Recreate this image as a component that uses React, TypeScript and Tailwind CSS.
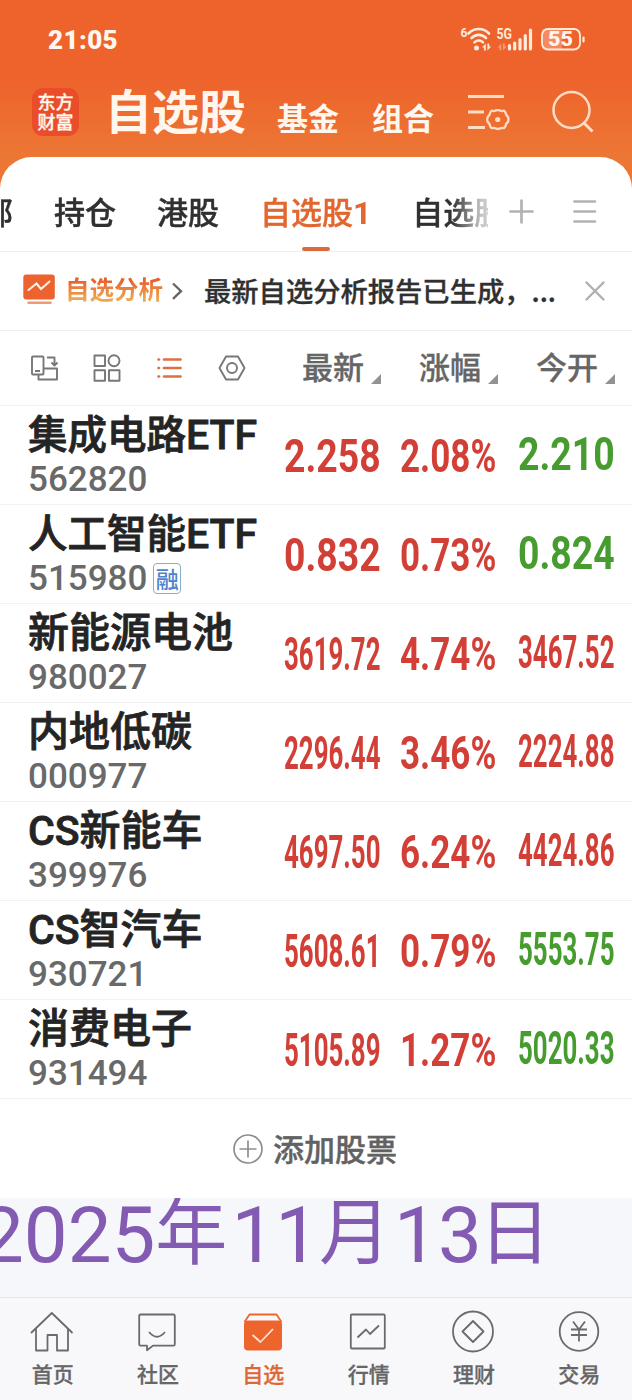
import React from "react";
import clsx from "clsx";

interface Stock {
  name: string;
  code: string;
  price: string;
  change: string;
  open: string;
  openUp: boolean;
  margin?: boolean;
}

const STOCKS: Stock[] = [
  { name: "集成电路ETF", code: "562820", price: "2.258", change: "2.08%", open: "2.210", openUp: false },
  { name: "人工智能ETF", code: "515980", price: "0.832", change: "0.73%", open: "0.824", openUp: false, margin: true },
  { name: "新能源电池", code: "980027", price: "3619.72", change: "4.74%", open: "3467.52", openUp: true },
  { name: "内地低碳", code: "000977", price: "2296.44", change: "3.46%", open: "2224.88", openUp: true },
  { name: "CS新能车", code: "399976", price: "4697.50", change: "6.24%", open: "4424.86", openUp: true },
  { name: "CS智汽车", code: "930721", price: "5608.61", change: "0.79%", open: "5553.75", openUp: false },
  { name: "消费电子", code: "931494", price: "5105.89", change: "1.27%", open: "5020.33", openUp: false },
];

const COLUMNS = ["最新", "涨幅", "今开"];

function StatusBar() {
  return (
    <div className="flex h-[80px] items-center justify-between pl-[48px] pr-[46px]">
      <span className="font-[Roboto] text-[26px] font-black leading-[32px] tracking-[0.4px]">21:05</span>
      <svg width="126" height="28" viewBox="460 26 126 28" fill="none" stroke="#ffeadc" strokeLinecap="round">
        <text x="460.5" y="37" fontFamily="Roboto" fontSize="12" fontWeight="700" fill="#ffeadc" stroke="none">6</text>
        <path d="M468.500 33.500a14 14 0 0 1 20.500 0" strokeWidth="2.600" />
        <path d="M471.500 38a10 10 0 0 1 14.500 0" strokeWidth="2.600" />
        <path d="M474.500 42.300a6 6 0 0 1 8.500 0" strokeWidth="2.600" />
        <circle cx="476.500" cy="48" r="2.500" fill="#ffeadc" stroke="none" />
        <path d="M485.800 50.500v-7l-3.800 4h2v3zM487.400 43.500v7l3.800-4h-2v-3z" fill="#ffeadc" stroke="none" />
        <text x="496.500" y="39" fontFamily="Roboto" fontSize="14.500" fontWeight="700" fill="#ffeadc" stroke="none" textLength="15.500" lengthAdjust="spacingAndGlyphs">5G</text>
        <path d="M501.300 50.500v-7l-3.800 4h2v3zM502.900 43.500v7l3.800-4h-2v-3z" fill="#f79a75" stroke="none" />
        <path d="M509.500 45.500v3.500M514.700 43v6M520 39.500v9.500M525.300 35.500v13.500M530.500 30v19" strokeWidth="3.200" />
        <path d="M544 29h18v20h-18q-2 0-2-2V31q0-2 2-2z" fill="#f48a62" stroke="none" />
        <rect x="542" y="29" width="38" height="20.500" rx="6" strokeWidth="1.800" />
        <path d="M583.500 37.500v4" strokeWidth="2.200" />
        <text x="548" y="46.300" fontFamily="Roboto" fontSize="19.500" fontWeight="900" fill="#fff4ec" stroke="none" textLength="25" lengthAdjust="spacingAndGlyphs">55</text>
      </svg>
    </div>
  );
}

function Header() {
  return (
    <header className="h-[190px] bg-[linear-gradient(#ee622b_0px,#ee622b_75px,#ec7735_157px)] text-[#fff7ee]">
      <StatusBar />
      <div className="flex h-[76px]">
        <div className="ml-[32px] mt-[8px] flex h-[48px] w-[47px] flex-col items-center justify-center rounded-[11px] bg-[#ea4d2a] pb-[3px] text-[18px] font-medium leading-[20px] [-webkit-text-stroke:0.3px]">
          <span>东方</span>
          <span>财富</span>
        </div>
        <h1 className="ml-[26px] mt-[-3px] text-[47px] font-bold leading-[64px]">自选股</h1>
        <span className="ml-[31px] mt-[17px] text-[31px] font-bold leading-[40px]">基金</span>
        <span className="ml-[33px] mt-[17px] text-[31px] font-bold leading-[40px]">组合</span>
        <svg className="ml-[32px] mt-[12px]" width="44" height="42" viewBox="466 92 44 42" fill="none" stroke="#ffdcc3" strokeWidth="2.800">
          <path d="M468 96.500h36M468 112h16M468 127.500h17" />
          <path d="M491.500 110.700q1.800.600 3 .200q1.600-.700 3.400-.700t3.300.700q1.200.400 2.800-.200q1.800 1.600 1.900 3.300q.600 1.500 1.800 2.500q.900 1 .700 3q0 1.800-.700 2.800q-1.400 1-1.800 2.400q-.200 2-1.900 3.400q-1.600-.400-2.800 0q-1.500.900-3.300.900t-3.400-.900q-1.200-.400-3 0q-1.600-1.400-1.700-3.400q-.500-1.400-1.700-2.400q-.900-1-.900-2.800q0-2 .900-3q1.200-1 1.700-2.500q.100-1.700 1.700-3.300z" strokeWidth="2.300" />
          <circle cx="497.700" cy="119.500" r="2.600" fill="#ffdcc3" stroke="none" />
        </svg>
        <svg className="ml-[41px] mt-[9px]" width="44" height="46" viewBox="551 89 44 46" fill="none" stroke="#ffdcc3" strokeWidth="2.500">
          <circle cx="571.500" cy="110" r="18" />
          <path d="M584 123l8.500 8.500" strokeWidth="3" />
        </svg>
      </div>
    </header>
  );
}

function GroupTabs() {
  return (
    <div className="flex h-[95px] overflow-hidden border-b border-[#efefef] text-[31px] font-medium leading-[40px] text-[#303030]">
      <div className="flex w-[488px] shrink-0 overflow-hidden whitespace-nowrap pt-[34px] [-webkit-text-stroke:0.4px] [mask-image:linear-gradient(90deg,#000_452px,#0004_482px)]">
        <span className="ml-[-18px]">部</span>
        <span className="ml-[41px]">持仓</span>
        <span className="ml-[41px]">港股</span>
        <div className="ml-[41px] flex w-[112px] flex-col items-center text-[#e2672f]">
          <span className="h-[40px]">
            自选股<b className="font-[Roboto] text-[32px] font-bold [-webkit-text-stroke:0px]">1</b>
          </span>
          <i className="mt-[16px] h-[4px] w-[28px] shrink-0 rounded-full bg-[#da6b3d]" />
        </div>
        <span className="ml-[41px]">自选股2</span>
      </div>
      <svg className="mt-[40px] ml-[20px]" width="92" height="30" viewBox="508 197 92 30" fill="none" stroke="#b2b2b2" strokeWidth="2.700" strokeLinecap="round">
        <path d="M510.500 211.500h22M521.500 200.500v22M574.500 201.500h20.500M574.500 211.500h20.500M574.500 221.500h20.500" />
      </svg>
    </div>
  );
}

function AnalysisBanner() {
  return (
    <div className="flex h-[79px] items-center border-b border-[#efefef] pb-[2px]">
      <svg className="ml-[22px]" width="34" height="32" viewBox="22 273 34 32" fill="none">
        <rect x="23.300" y="273.500" width="31.500" height="25" rx="3" fill="#ed6330" />
        <path d="M28.500 289l8-6.500 4.500 5.500 8.500-7.500" stroke="#fff3e8" strokeWidth="2" strokeLinecap="round" />
        <path d="M28.500 301.800h22" stroke="#f09a70" strokeWidth="2.500" strokeLinecap="round" />
      </svg>
      <span className="ml-[9px] mt-[-2px] bg-gradient-to-b from-[#e5622e] from-25% to-[#eda751] to-80% bg-clip-text text-[24.500px] font-bold leading-[34px] text-transparent">自选分析</span>
      <svg className="ml-[8px] mt-[1px]" width="13" height="20" viewBox="0 0 13 20" fill="none" stroke="#666" strokeWidth="2.400">
        <path d="M2 2.500l8 7.700-8 7.700" />
      </svg>
      <span className="ml-[20px] mt-[-1px] w-[356px] whitespace-nowrap text-[27.300px] font-medium leading-[36px] text-[#303030] [-webkit-text-stroke:0.3px]">最新自选分析报告已生成，...</span>
      <svg className="ml-[25px] mt-[2px]" width="20" height="20" viewBox="0 0 20 20" stroke="#b0b0b0" strokeWidth="2.400" strokeLinecap="round">
        <path d="M1.500 1.500l17 17M18.500 1.500l-17 17" />
      </svg>
    </div>
  );
}

function ListHeader() {
  return (
    <div className="flex h-[75px] border-b border-[#f2f2f2]">
      <svg className="ml-[28px] mt-[20px] shrink-0" width="220" height="34" viewBox="28 351 220 34" fill="none" stroke="#777" strokeWidth="1.900" strokeLinejoin="round">
        <rect x="32" y="356.500" width="11.500" height="18" rx="1" />
        <path d="M35 371h5M47 357.500h7.500v7M51.500 362.500l3 3 3-3" />
        <path d="M38.500 375v4.500h18.500v-11H43.500" />
        <rect x="94.500" y="355.500" width="10.500" height="10.500" />
        <circle cx="114" cy="360.800" r="5.500" />
        <rect x="94.500" y="370.300" width="10.500" height="10.500" />
        <rect x="109" y="370.300" width="10.500" height="10.500" />
        <path d="M158.500 359.500h.5M158.500 368h.5M158.500 376.500h.5M164 359.500h16.500M164 368h16.500M164 376.500h16.500" stroke="#dc7040" strokeWidth="2.700" strokeLinecap="round" />
        <path d="M226 356.500h12l6.500 11.500-6.500 11.500h-12L219.500 368z" />
        <circle cx="232" cy="368" r="5" />
      </svg>
      <div className="ml-[54px] flex gap-[38px]">
        {COLUMNS.map((label) => (
          <div key={label} className="flex w-[79px] pt-[15px] text-[31px] font-medium leading-[40px] text-[#666]">
            <span className="shrink-0 [-webkit-text-stroke:0.3px]">{label}</span>
            <svg className="ml-[7px] mt-[28px] shrink-0" width="10" height="10" viewBox="0 0 10 10" fill="#929292">
              <path d="M10 0v10H0z" />
            </svg>
          </div>
        ))}
      </div>
    </div>
  );
}

interface QuoteProps {
  value: string;
  up: boolean;
  className?: string;
}

// Squeezes the digits so every quote fills the same column width
function Quote({ value, up, className }: QuoteProps) {
  return (
    <div className={clsx("w-[97px] shrink-0 font-[Roboto] text-[47px] font-bold leading-[56px]", className)}>
      <span
        className={clsx(
          "block w-max origin-left",
          value.endsWith("%") ? "scale-x-[0.745]" : value.length > 5 ? "scale-x-[0.55]" : "scale-x-[0.795]",
          up ? "text-[#d23f36]" : "text-[#469c2e]"
        )}
      >
        {value}
      </span>
    </div>
  );
}

function StockRow({ stock }: { stock: Stock }) {
  return (
    <div className="flex h-[99px] border-b border-[#f2f2f2]">
      <div className="ml-[28px] w-[256px] shrink-0">
        <div className="mt-[5px] h-[49px] whitespace-nowrap font-[Roboto,'Noto_Sans_CJK_SC'] text-[41px] font-medium leading-[48px] text-[#242424] [-webkit-text-stroke:0.8px]">
          {stock.name.endsWith("ETF") ? (
            <>
              <span className="text-[39.500px]">{stock.name.slice(0, -3)}</span>ETF
            </>
          ) : (
            stock.name
          )}
        </div>
        <div className="flex h-[40px] items-center">
          <span className="font-[Roboto] text-[35px] font-medium leading-[40px] text-[#696969]">{stock.code}</span>
          {stock.margin && (
            <span className="ml-[6px] mt-[-1px] flex h-[31px] w-[28px] items-center justify-center rounded-[4px] border border-[#86aeca] pb-[2px] text-[23px] font-medium leading-[28px] text-[#4e83cc]">
              融
            </span>
          )}
        </div>
      </div>
      <Quote value={stock.price} up className="mt-[22px]" />
      <Quote value={stock.change} up className="ml-[19px] mt-[22px]" />
      <Quote value={stock.open} up={stock.openUp} className="ml-[21px] mt-[20px]" />
    </div>
  );
}

function AddStock() {
  return (
    <div className="flex h-[99px] items-center justify-center pr-[2px]">
      <svg width="30" height="30" viewBox="0 0 30 30" fill="none" stroke="#8d8d8d" strokeWidth="1.700">
        <circle cx="15" cy="15" r="14" />
        <path d="M6.500 15h17M15 6.500v17" />
      </svg>
      <span className="mt-[-2px] ml-[10px] text-[31px] font-medium leading-[40px] text-[#626262] [-webkit-text-stroke:0.4px]">添加股票</span>
    </div>
  );
}

function DateBanner() {
  return (
    <div className="h-[99px] overflow-hidden bg-[#f6f7fa]">
      <div className="ml-[-20px] mt-[-7px] flex items-baseline whitespace-nowrap font-[Roboto] text-[78px] leading-[80px] text-[#845bb3]">
        <span>2025</span>
        <span className="-translate-y-[4px] font-['Noto_Sans_CJK_SC'] text-[72px]">年</span>
        <span className="ml-[4px]">11</span>
        <span className="-translate-y-[4px] font-['Noto_Sans_CJK_SC'] text-[72px]">月</span>
        <span className="ml-[3px]">13</span>
        <span className="ml-[-3px] -translate-y-[4px] font-['Noto_Sans_CJK_SC'] text-[72px]">日</span>
      </div>
    </div>
  );
}

const NAV_ITEMS = [
  {
    label: "首页",
    icon: <path d="M1.500 23L22.300 3 43 23M6.500 19v21.500h11.500V25H27.500v15.500H38.500V19" />,
  },
  {
    label: "社区",
    icon: (
      <>
        <path d="M6 4.500h33q1.300 0 1.300 1.300v28.500q0 1.300-1.300 1.300H18.500L12.500 40.300v-4.700H6q-1.300 0-1.300-1.300V5.800q0-1.300 1.300-1.300z" />
        <path d="M14.500 22q8 9.500 16 0" />
      </>
    ),
  },
  {
    label: "自选",
    active: true,
    icon: (
      <>
        <path d="M4 12L9 4.500h27L41 12" stroke="#ed642c" />
        <rect x="3.500" y="10.500" width="38" height="30" rx="4" fill="#ed642c" stroke="none" />
        <path d="M12 25l8 7 12.500-13" stroke="#ffe5d4" />
      </>
    ),
  },
  {
    label: "行情",
    icon: (
      <>
        <rect x="5.300" y="4.500" width="34" height="34" rx="1" />
        <path d="M12 27.500l8.500-8 4 4.500 9-8.500" />
      </>
    ),
  },
  {
    label: "理财",
    icon: (
      <>
        <circle cx="22.500" cy="21.500" r="20" />
        <path d="M22.500 11L33 21.500 22.500 32 12 21.500z" />
      </>
    ),
  },
  {
    label: "交易",
    icon: (
      <>
        <circle cx="22.500" cy="21.500" r="19.300" />
        <path d="M16.500 11.500l6 8 6-8M22.500 19.500v12M14.500 19.500h16M14.500 25h16" />
      </>
    ),
  },
];

function BottomNav() {
  return (
    <nav className="grid h-[103px] grid-cols-6 border-t border-[#e7e7e9] bg-[#f8f8fb]">
      {NAV_ITEMS.map((item) => (
        <div
          key={item.label}
          className={clsx("flex flex-col items-center pt-[12px]", item.active ? "text-[#dc6935]" : "text-[#666]")}
        >
          <svg width="45" height="44" viewBox="0.5 0 45 44" fill="none" stroke="#6b6b6b" strokeWidth="1.800" strokeLinejoin="round">
            {item.icon}
          </svg>
          <span className="mt-[4px] text-[21px] font-medium leading-[30px] [-webkit-text-stroke:0.3px]">{item.label}</span>
        </div>
      ))}
    </nav>
  );
}

export default function App() {
  return (
    <div className="h-[1400px] w-[632px] overflow-hidden bg-white font-['Noto_Sans_CJK_SC',sans-serif]">
      <Header />
      <main className="relative mt-[-33px] rounded-t-[32px] bg-white">
        <GroupTabs />
        <AnalysisBanner />
        <ListHeader />
        {STOCKS.map((stock) => (
          <StockRow key={stock.code} stock={stock} />
        ))}
        <AddStock />
        <DateBanner />
      </main>
      <BottomNav />
    </div>
  );
}
